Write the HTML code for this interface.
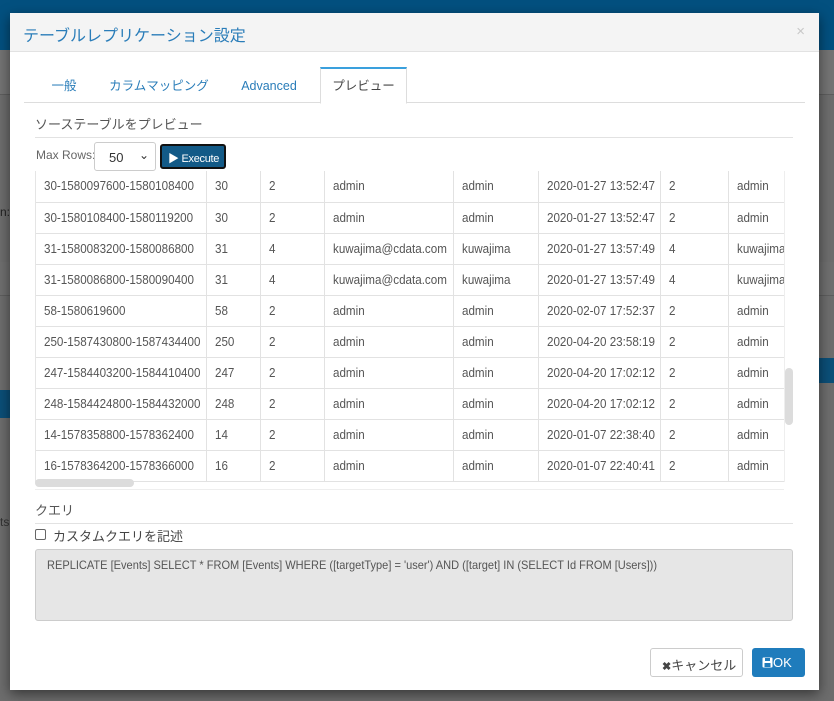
<!DOCTYPE html>
<html><head><meta charset="utf-8"><style>
*{box-sizing:border-box;margin:0;padding:0}
body{width:834px;height:701px;overflow:hidden;background:#6d6d6d;font-family:"Liberation Sans","Noto Sans CJK JP",sans-serif;position:relative}
.top{position:absolute;left:0;top:0;width:834px;height:50px;background:#03507f}
.band{position:absolute;left:0;width:834px;background:#747474;border-bottom:1px solid #5e5e5e}
.modal{position:absolute;left:10px;top:13px;width:809px;height:677px;background:#fff;box-shadow:0 4px 12px rgba(0,0,0,.5)}
.hdr{height:39px;background:#f4f4f4;border-bottom:1px solid #e2e2e2;position:relative}
.hdr h1{font-weight:normal;font-size:16px;color:#2a7db9;position:absolute;left:13px;top:9px}
.hdr .x{position:absolute;right:14px;top:10px;color:#c8c8c8;font-size:15px}
.tabs{position:absolute;left:14px;top:54px;width:781px;height:36px;border-bottom:1px solid #ddd}
.tab{position:absolute;top:0;height:36px;font-size:12.5px;color:#2a7db9;line-height:38px;text-align:center}
.tab.act{background:#fff;border:1px solid #ddd;border-top:2px solid #3aa0dd;border-bottom:1px solid #fff;color:#444;height:37px;line-height:34px}
.sec{position:absolute;left:25px;width:758px;font-size:13px;color:#555;border-bottom:1px solid #e2e2e2;padding-bottom:4px}
.t{position:absolute;left:25px;top:158px;width:750px;height:311px;overflow:hidden;border-left:1px solid #e5e5e5}
table{border-collapse:collapse;font-size:12.5px;color:#555;table-layout:fixed;width:750px}
td{height:31px;border-right:1px solid #e2e2e2;border-bottom:1px solid #e2e2e2;padding-left:8px;white-space:nowrap;overflow:hidden}
td span{display:inline-block;transform:scaleX(.93);transform-origin:left}
</style></head><body>
<div class="top"></div>
<div class="band" style="top:50px;height:45px"></div>
<div class="band" style="top:262px;height:34px;background:#6f6f6f"></div>
<div style="position:absolute;left:0;top:390px;width:10px;height:28px;background:#0b4f78"></div>
<div style="position:absolute;left:819px;top:358px;width:15px;height:25px;background:#0b4f78"></div>
<div style="position:absolute;left:0;top:205px;font-size:12px;color:#222">n:</div>
<div style="position:absolute;left:0;top:515px;font-size:12px;color:#333">ts</div>
<div class="modal">
<div class="hdr"><h1>テーブルレプリケーション設定</h1><span class="x">×</span></div>
<div class="tabs">
<div class="tab" style="left:20px;width:40px">一般</div>
<div class="tab" style="left:85px;width:100px">カラムマッピング</div>
<div class="tab" style="left:210px;width:70px">Advanced</div>
<div class="tab act" style="left:296px;width:87px">プレビュー</div>
</div>
<div class="sec" style="top:101px">ソーステーブルをプレビュー</div>
<div style="position:absolute;left:26px;top:135px;font-size:12px;color:#666">Max Rows:</div>
<div style="position:absolute;left:84px;top:129px;width:62px;height:29px;border:1px solid #ccc;border-radius:3px;font-size:13px;color:#333;padding:7px 0 0 14px">50<span style="position:absolute;right:6px;top:5px;font-size:12px">&#x2304;</span></div>
<div style="position:absolute;left:150px;top:131px;width:66px;height:25px;background:#135a87;border:2px solid #111;border-radius:3px;color:#fff;font-size:11px;padding:4px 0 0 6px;letter-spacing:-.3px">&#9654; Execute</div>
<div class="t"><table>
<colgroup><col style="width:170px"><col style="width:54px"><col style="width:64px"><col style="width:129px"><col style="width:85px"><col style="width:122px"><col style="width:68px"><col style="width:58px"></colgroup>
<tr><td><span>30-1580097600-1580108400</span></td><td><span>30</span></td><td><span>2</span></td><td><span>admin</span></td><td><span>admin</span></td><td><span>2020-01-27 13:52:47</span></td><td><span>2</span></td><td><span>admin</span></td></tr>
<tr><td><span>30-1580108400-1580119200</span></td><td><span>30</span></td><td><span>2</span></td><td><span>admin</span></td><td><span>admin</span></td><td><span>2020-01-27 13:52:47</span></td><td><span>2</span></td><td><span>admin</span></td></tr>
<tr><td><span>31-1580083200-1580086800</span></td><td><span>31</span></td><td><span>4</span></td><td><span>kuwajima@cdata.com</span></td><td><span>kuwajima</span></td><td><span>2020-01-27 13:57:49</span></td><td><span>4</span></td><td><span>kuwajima</span></td></tr>
<tr><td><span>31-1580086800-1580090400</span></td><td><span>31</span></td><td><span>4</span></td><td><span>kuwajima@cdata.com</span></td><td><span>kuwajima</span></td><td><span>2020-01-27 13:57:49</span></td><td><span>4</span></td><td><span>kuwajima</span></td></tr>
<tr><td><span>58-1580619600</span></td><td><span>58</span></td><td><span>2</span></td><td><span>admin</span></td><td><span>admin</span></td><td><span>2020-02-07 17:52:37</span></td><td><span>2</span></td><td><span>admin</span></td></tr>
<tr><td><span>250-1587430800-1587434400</span></td><td><span>250</span></td><td><span>2</span></td><td><span>admin</span></td><td><span>admin</span></td><td><span>2020-04-20 23:58:19</span></td><td><span>2</span></td><td><span>admin</span></td></tr>
<tr><td><span>247-1584403200-1584410400</span></td><td><span>247</span></td><td><span>2</span></td><td><span>admin</span></td><td><span>admin</span></td><td><span>2020-04-20 17:02:12</span></td><td><span>2</span></td><td><span>admin</span></td></tr>
<tr><td><span>248-1584424800-1584432000</span></td><td><span>248</span></td><td><span>2</span></td><td><span>admin</span></td><td><span>admin</span></td><td><span>2020-04-20 17:02:12</span></td><td><span>2</span></td><td><span>admin</span></td></tr>
<tr><td><span>14-1578358800-1578362400</span></td><td><span>14</span></td><td><span>2</span></td><td><span>admin</span></td><td><span>admin</span></td><td><span>2020-01-07 22:38:40</span></td><td><span>2</span></td><td><span>admin</span></td></tr>
<tr><td><span>16-1578364200-1578366000</span></td><td><span>16</span></td><td><span>2</span></td><td><span>admin</span></td><td><span>admin</span></td><td><span>2020-01-07 22:40:41</span></td><td><span>2</span></td><td><span>admin</span></td></tr>
</table></div>
<div style="position:absolute;left:774px;top:158px;width:10px;height:311px;border-left:1px solid #eee"></div>
<div style="position:absolute;left:775px;top:355px;width:8px;height:57px;background:#dcdcdc;border-radius:4px"></div>
<div style="position:absolute;left:25px;top:469px;width:749px;height:8px;border-bottom:1px solid #eee"></div>
<div style="position:absolute;left:25px;top:466px;width:99px;height:8px;background:#dcdcdc;border-radius:4px"></div>
<div class="sec" style="top:487px">クエリ</div>
<div style="position:absolute;left:25px;top:516px;width:11px;height:11px;border:1px solid #666;border-radius:2px"></div>
<div style="position:absolute;left:43px;top:513px;font-size:13px;color:#444">カスタムクエリを記述</div>
<div style="position:absolute;left:25px;top:536px;width:758px;height:72px;background:#e6e6e6;border:1px solid #ccc;border-radius:3px;font-size:12px;color:#555;padding:8px 11px"><span style="display:inline-block;transform:scaleX(.92);transform-origin:left;white-space:nowrap">REPLICATE [Events] SELECT * FROM [Events] WHERE ([targetType] = 'user') AND ([target] IN (SELECT Id FROM [Users]))</span></div>
<div style="position:absolute;left:640px;top:635px;width:93px;height:29px;border:1px solid #ccc;border-radius:3px;font-size:13px;color:#444;padding:6px 0 0 11px"><b style="font-size:11px">✖</b>キャンセル</div>
<div style="position:absolute;left:742px;top:635px;width:53px;height:29px;background:#1f7cbc;border-radius:3px;font-size:13px;color:#fff;padding:7px 0 0 10px"><svg width="11" height="11" viewBox="0 0 11 11" style="vertical-align:-1px"><rect x=".5" y=".5" width="10" height="10" rx="1" fill="#fff"/><rect x="3" y="1" width="5" height="3" fill="#1f7cbc"/><rect x="2.5" y="6" width="6" height="4" fill="#1f7cbc"/></svg>OK</div>
</div>
</body></html>
